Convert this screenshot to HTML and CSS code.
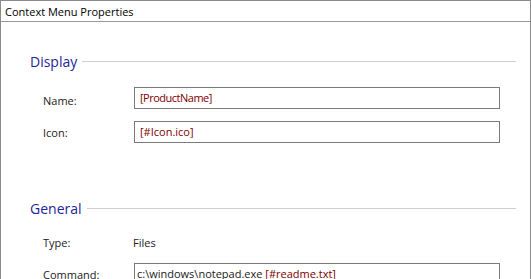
FILE: index.html
```html
<!DOCTYPE html>
<html lang="en">
<head>
    <meta charset="UTF-8">
    <title>Context Menu Properties</title>
    <link rel="stylesheet" href="styles.css">
</head>
<body>

    <!-- Dialog window -->
    <div class="window">
        <div class="titlebar">Context Menu Properties</div>

        <div class="content">
            <!-- Display group -->
            <div class="group-head">
                <span>Display</span>
                <div class="rule"></div>
            </div>
            <div class="field first">
                <label class="label name-label">Name:</label>
                <div class="box"><span class="token tight">[ProductName]</span></div>
            </div>
            <div class="field">
                <label class="label">Icon:</label>
                <div class="box"><span class="token">[#Icon.ico]</span></div>
            </div>

            <!-- General group -->
            <div class="group-head general">
                <span>General</span>
                <div class="rule"></div>
            </div>
            <div class="field type-row">
                <label class="label">Type:</label>
                <span class="value">Files</span>
            </div>
            <div class="field cmd-row">
                <label class="label">Command:</label>
                <div class="box cmd">c:\windows\notepad.exe <span class="token">[#readme.txt]</span></div>
            </div>
        </div>
    </div>

</body>
</html>
```

FILE: styles.css
```css
* {
    box-sizing: border-box;
}

body {
    margin: 0;
    background-color: #fff;
    font-family: 'Open Sans', sans-serif;
    font-size: 11px;
    color: #1a1a1a;
}

.window {
    width: 531px;
    height: 279px;
    overflow: hidden;
    border-top: 1px solid #8a8a8a;
    border-left: 1px solid #8a8a8a;
    border-right: 1px solid #8a8a8a;
}

.titlebar {
    height: 21px;
    padding-left: 4px;
    padding-top: 2px;
    line-height: 18px;
    border-bottom: 1px solid #999;
    color: #000;
}

.content {
    padding: 29px 14px 0 29px;
}

.group-head {
    display: flex;
    align-items: center;
    height: 20px;
    color: #24249a;
    font-size: 14px;
}

.group-head.general {
    margin-top: 55px;
}

.rule {
    flex: 1;
    height: 1px;
    margin-left: 5px;
    background-color: #cfcfcf;
}

.field {
    display: flex;
    align-items: center;
    height: 22px;
    margin-top: 12px;
}

.field.first {
    margin-top: 16px;
}

.field.type-row {
    margin-top: 13px;
}

.field.cmd-row {
    margin-top: 10px;
}

.label {
    width: 91px;
    margin-left: 13px;
}

.name-label {
    padding-top: 5px;
}

.box {
    width: 366px;
    height: 22px;
    padding-left: 5px;
    line-height: 20px;
    border: 1px solid #7a7a7a;
    white-space: nowrap;
    overflow: hidden;
}

.box.cmd {
    padding-left: 2px;
}

.token {
    color: #800000;
}

.tight {
    letter-spacing: -0.5px;
}

.value {
    margin-left: -1px;
}
```
